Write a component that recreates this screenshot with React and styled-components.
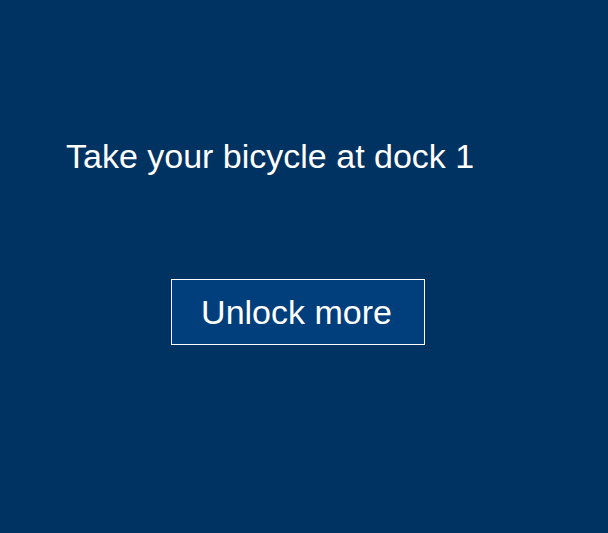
import React from 'react';
import styled, { createGlobalStyle } from 'styled-components';

const GlobalStyle = createGlobalStyle`
  html, body {
    margin: 0;
    padding: 0;
    background: #003262;
  }
  body {
    font-family: "Liberation Sans", Arial, sans-serif;
  }
`;

const Screen = styled.div`
  width: 608px;
  height: 533px;
  background: #003262;
  color: #fff;
  display: flex;
  flex-direction: column;
  padding: 134px 0 0 66px;
  box-sizing: border-box;
`;

const Title = styled.h1`
  margin: 0;
  font-size: 34px;
  font-weight: 400;
  line-height: 44px;
`;

const UnlockButton = styled.button`
  margin: 101px 0 0 105px;
  width: 254px;
  height: 66px;
  background: #003e7c;
  border: 1px solid #fff;
  color: #fff;
  font-family: "Liberation Sans", Arial, sans-serif;
  font-size: 34px;
  padding: 0 3px 0 0;
  cursor: pointer;
`;

export default function App() {
  return (
    <>
      <GlobalStyle />
      <Screen>
        <Title>Take your bicycle at dock 1</Title>
        <div>
          <UnlockButton>Unlock more</UnlockButton>
        </div>
      </Screen>
    </>
  );
}
